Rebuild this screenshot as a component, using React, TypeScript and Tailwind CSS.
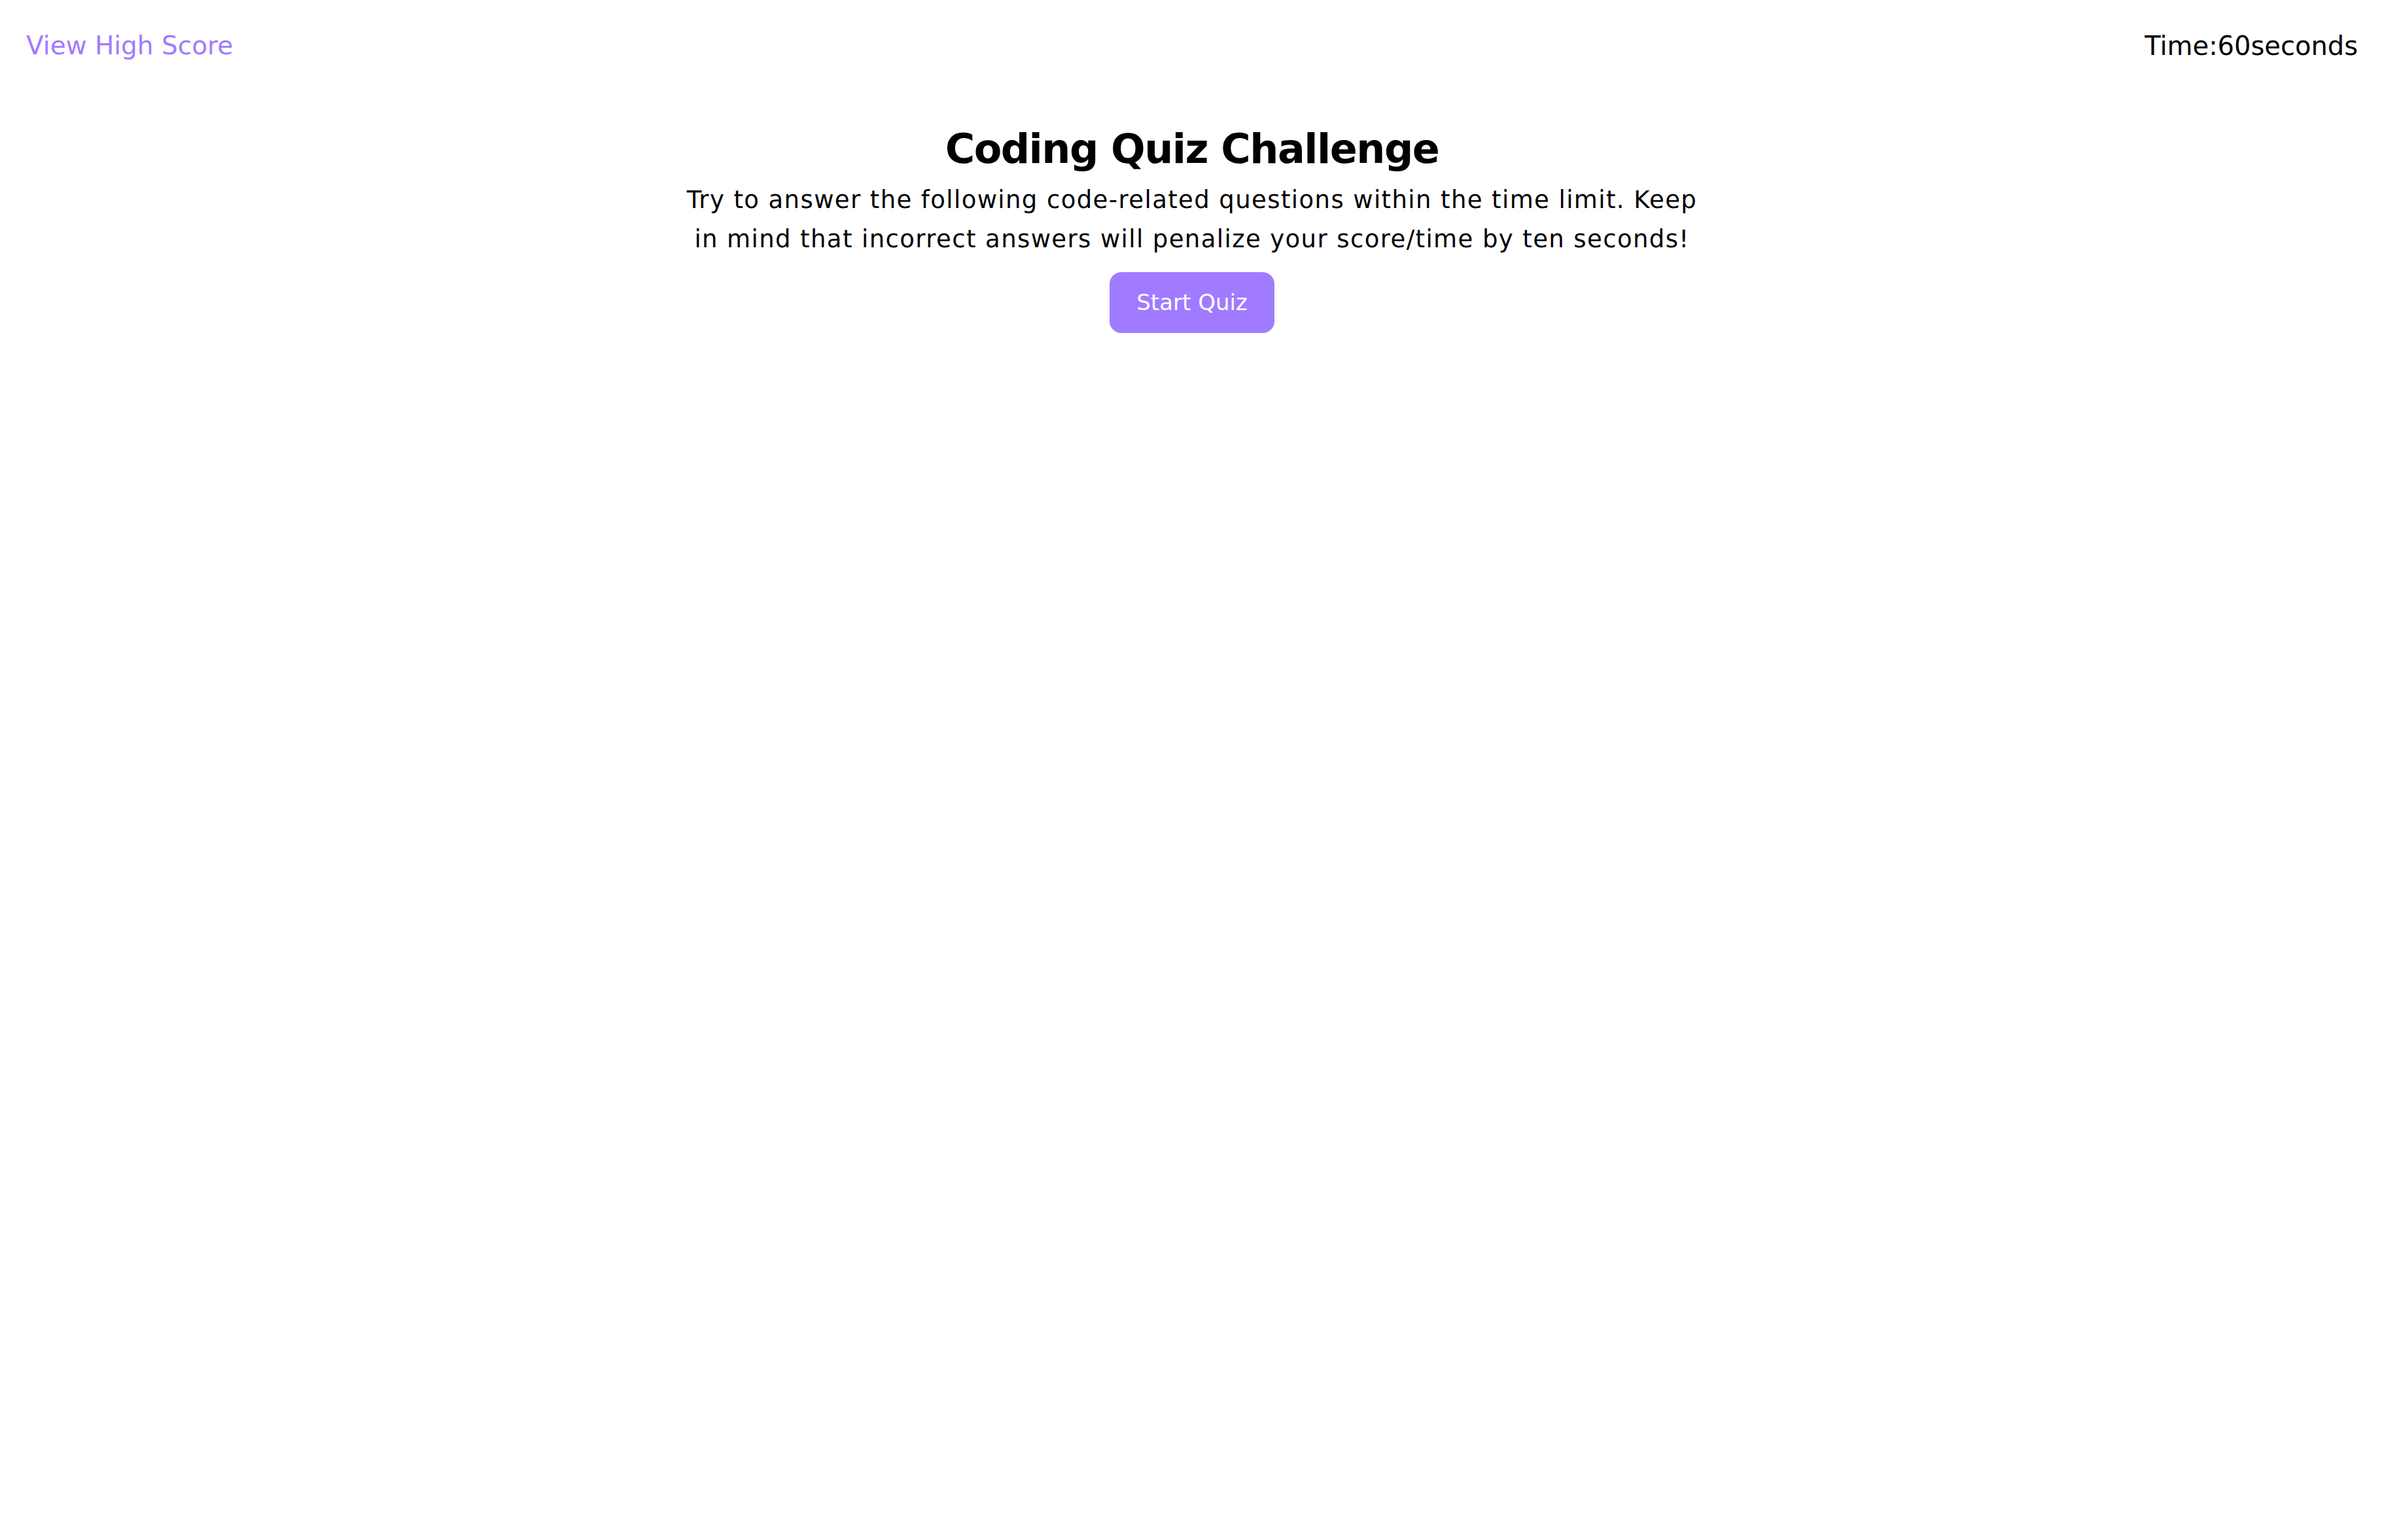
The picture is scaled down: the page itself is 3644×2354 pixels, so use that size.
export default function App() {
  return (
    <div className="min-h-screen bg-white text-black" style={{ fontFamily: "'DejaVu Sans', 'Noto Sans', sans-serif" }}>
      <header className="flex items-center justify-between px-[40px] pt-[40px]">
        <a href="#" className="text-[39px] leading-[60px] text-[#a07bff]">
          View High Score
        </a>
        <div className="text-[40px] leading-[60px]">Time:60seconds</div>
      </header>

      <main className="mx-auto flex max-w-[1570px] flex-col items-center text-center">
        <h1 className="mt-[88px] text-[62px] font-bold leading-[80px] tracking-[-1.5px]">Coding Quiz Challenge</h1>
        <p className="mt-[8px] text-[37px] leading-[60px] tracking-[1.4px]">
          Try to answer the following code-related questions within the time limit. Keep in mind that incorrect
          answers will penalize your score/time by ten seconds!
        </p>
        <button className="mt-[20px] h-[93px] w-[252px] rounded-[18px] bg-[#a07bff] text-[34px] text-white">
          Start Quiz
        </button>
      </main>
    </div>
  )
}
